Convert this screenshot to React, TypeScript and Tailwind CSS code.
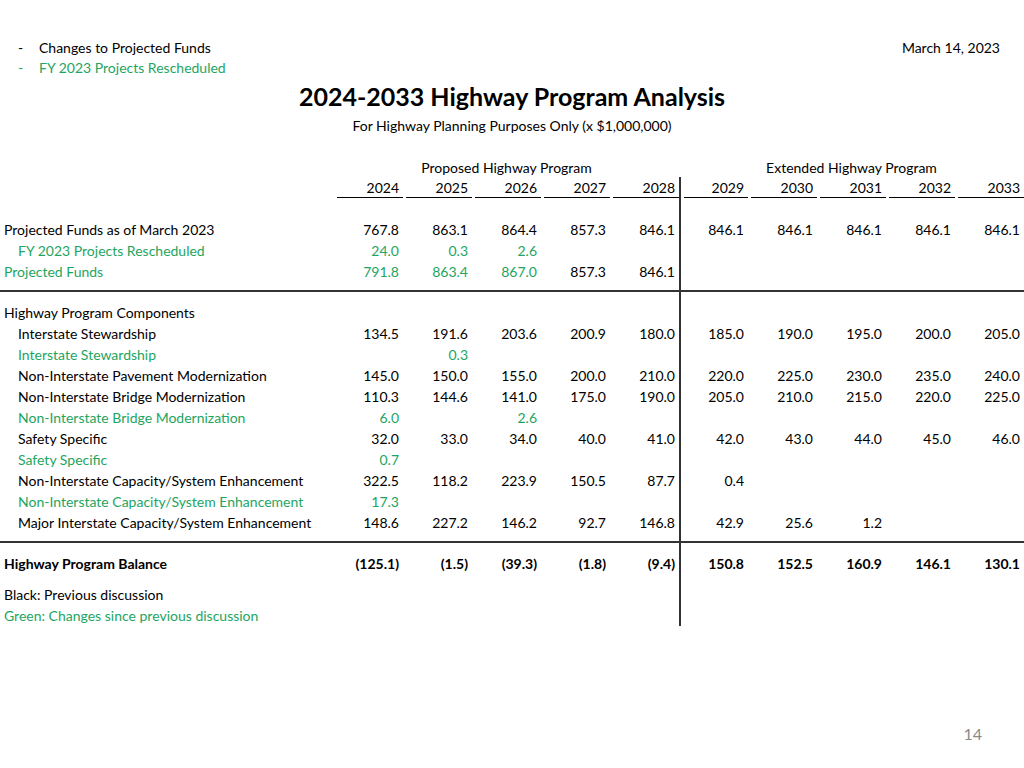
const GREEN = "text-[#1ea55f]";

type RowProps = {
  label?: string;
  vals?: (string | undefined)[];
  green?: boolean;
  bold?: boolean;
  indent?: boolean;
  h?: string;
};

function Row({ label = "", vals = [], green, bold, indent, h = "h-[21px]" }: RowProps) {
  const cols = Array.from({ length: 10 }, (_, i) => vals[i]);
  return (
    <div className={`flex ${h} items-center ${green ? GREEN : "text-black"} ${bold ? "font-bold" : ""}`}>
      <div className={`w-[334px] shrink-0 whitespace-nowrap ${indent ? "pl-[18px]" : "pl-[4px]"}`}>{label}</div>
      {cols.map((v, i) => (
        <div
          key={i}
          className={`w-[69px] shrink-0 h-full flex items-center justify-end pr-[4px] ${i === 5 ? "border-l-2 border-[#333]" : ""}`}
        >
          {v ?? ""}
        </div>
      ))}
    </div>
  );
}

const years = ["2024", "2025", "2026", "2027", "2028", "2029", "2030", "2031", "2032", "2033"];

export default function App() {
  return (
    <div className="w-[1024px] h-[768px] bg-white relative text-[14px]" style={{ fontFamily: "Lato, 'Open Sans', sans-serif" }}>
      <div className="flex justify-between pt-[37px] pr-[24px] text-[14px]">
        <div className="pl-[18px]">
          <div className="h-[20px] flex"><span className="w-[21px]">-</span>Changes to Projected Funds</div>
          <div className={`h-[20px] flex ${GREEN}`}><span className="w-[21px]">-</span>FY 2023 Projects Rescheduled</div>
        </div>
        <div>March 14, 2023</div>
      </div>
      <div className="text-center font-bold text-[25px] leading-[30px] mt-[4px]">2024-2033 Highway Program Analysis</div>
      <div className="text-center text-[14px] mt-[4px]">For Highway Planning Purposes Only (x $1,000,000)</div>

      <div className="flex mt-[21px] h-[20px] items-center">
        <div className="w-[334px]" />
        <div className="w-[345px] text-center">Proposed Highway Program</div>
        <div className="w-[345px] text-center">Extended Highway Program</div>
      </div>
      <div className="mt-[0px]">
        <div className="flex h-[21px]">
          <div className="w-[334px] shrink-0" />
          {years.map((y, i) => (
            <div key={y} className={`w-[69px] shrink-0 h-full pl-[3px] ${i === 5 ? "border-l-2 border-[#333]" : ""}`}>
              <div className="h-full border-b border-black text-right pr-[4px] leading-[21px]">{y}</div>
            </div>
          ))}
        </div>
        <Row h="h-[21px]" />
        <Row label="Projected Funds as of March 2023" vals={["767.8", "863.1", "864.4", "857.3", "846.1", "846.1", "846.1", "846.1", "846.1", "846.1"]} />
        <Row green indent label="FY 2023 Projects Rescheduled" vals={["24.0", "0.3", "2.6"]} />
        <Row label="Projected Funds" green vals={["791.8", "863.4", "867.0"]} />
        <div className="-mt-[21px]">
          <Row vals={[undefined, undefined, undefined, "857.3", "846.1"]} />
        </div>
        <Row h="h-[8px]" />
        <div className="h-[2px] bg-[#333]" />
        <Row h="h-[10px]" />
        <Row label="Highway Program Components" />
        <Row indent label="Interstate Stewardship" vals={["134.5", "191.6", "203.6", "200.9", "180.0", "185.0", "190.0", "195.0", "200.0", "205.0"]} />
        <Row indent green label="Interstate Stewardship" vals={[undefined, "0.3"]} />
        <Row indent label="Non-Interstate Pavement Modernization" vals={["145.0", "150.0", "155.0", "200.0", "210.0", "220.0", "225.0", "230.0", "235.0", "240.0"]} />
        <Row indent label="Non-Interstate Bridge Modernization" vals={["110.3", "144.6", "141.0", "175.0", "190.0", "205.0", "210.0", "215.0", "220.0", "225.0"]} />
        <Row indent green label="Non-Interstate Bridge Modernization" vals={["6.0", undefined, "2.6"]} />
        <Row indent label="Safety Specific" vals={["32.0", "33.0", "34.0", "40.0", "41.0", "42.0", "43.0", "44.0", "45.0", "46.0"]} />
        <Row indent green label="Safety Specific" vals={["0.7"]} />
        <Row indent label="Non-Interstate Capacity/System Enhancement" vals={["322.5", "118.2", "223.9", "150.5", "87.7", "0.4"]} />
        <Row indent green label="Non-Interstate Capacity/System Enhancement" vals={["17.3"]} />
        <Row indent label="Major Interstate Capacity/System Enhancement" vals={["148.6", "227.2", "146.2", "92.7", "146.8", "42.9", "25.6", "1.2"]} />
        <Row h="h-[8px]" />
        <div className="h-[2px] bg-[#333]" />
        <Row h="h-[10px]" />
        <Row bold label="Highway Program Balance" vals={["(125.1)", "(1.5)", "(39.3)", "(1.8)", "(9.4)", "150.8", "152.5", "160.9", "146.1", "130.1"]} />
        <Row h="h-[10px]" />
        <Row label="Black: Previous discussion" />
        <Row green label="Green: Changes since previous discussion" />
      </div>
      <div className="absolute right-[42px] top-[722px] text-[16px] text-[#8a8a8a]">14</div>
    </div>
  );
}
